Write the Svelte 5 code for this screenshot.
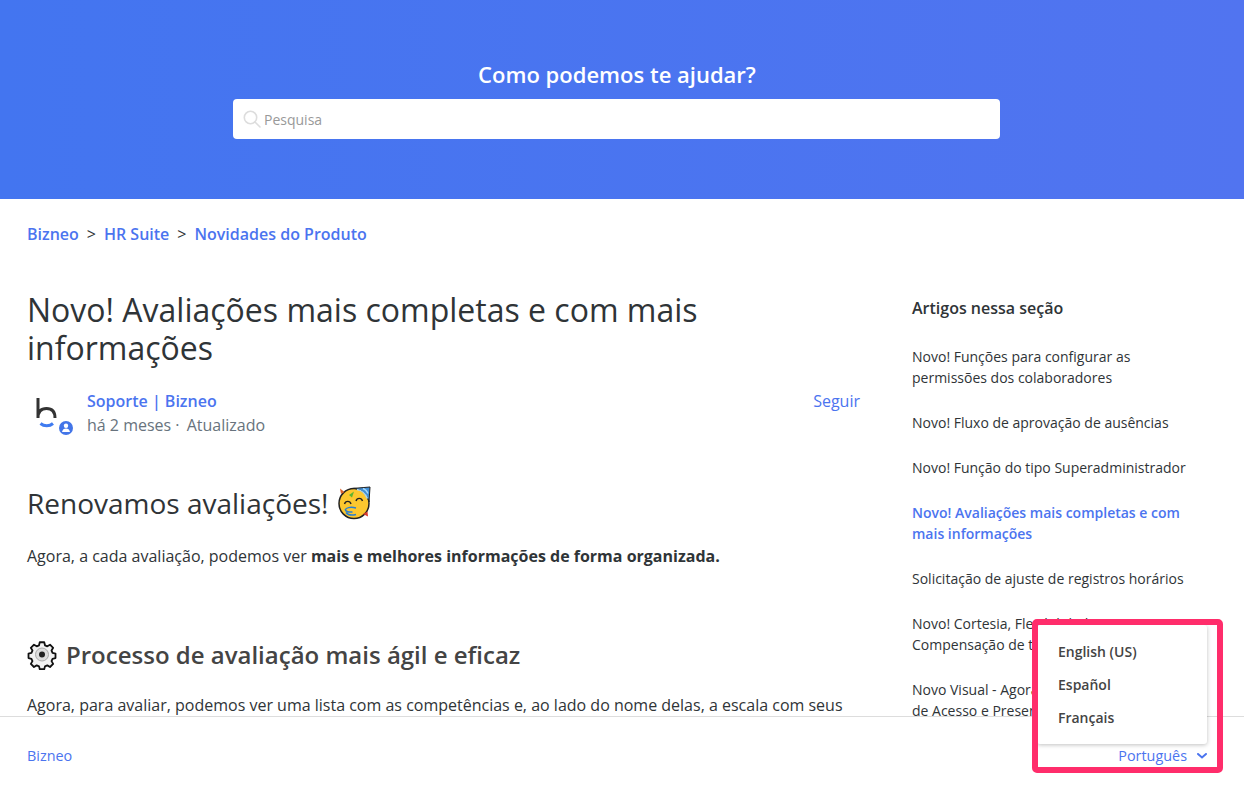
<script>
  const articles = [
    { title: 'Novo! Funções para configurar as permissões dos colaboradores' },
    { title: 'Novo! Fluxo de aprovação de ausências' },
    { title: 'Novo! Função do tipo Superadministrador' },
    { title: 'Novo! Avaliações mais completas e com mais informações', current: true },
    { title: 'Solicitação de ajuste de registros horários' },
    { title: 'Novo! Cortesia, Flexibilidade e Compensação de tempo' },
    { title: 'Novo Visual - Agora no Módulo Controle de Acesso e Presença' }
  ];
  const languages = ['English (US)', 'Español', 'Français'];
</script>

<div class="page">
  <header class="hero">
    <h1>Como podemos te ajudar?</h1>
    <div class="search">
      <svg width="18" height="18" viewBox="0 0 18 18" fill="none" stroke="#ddd" stroke-width="1.6">
        <circle cx="7.5" cy="7.5" r="6.2" />
        <path d="M12 12l5 5" stroke-linecap="round" />
      </svg>
      <span>Pesquisa</span>
    </div>
  </header>

  <main class="content">
    <nav class="crumbs">
      <a href="#a">Bizneo</a><span>&gt;</span><a href="#a">HR Suite</a><span>&gt;</span><a href="#a">Novidades do Produto</a>
    </nav>

    <div class="columns">
      <article>
        <h2 class="title">Novo! Avaliações mais completas e com mais informações</h2>

        <div class="author">
          <div class="avatar">
            <svg width="46" height="46" viewBox="0 0 46 46" fill="none">
              <path d="M11 9v20M11 29c0-6 3-9.500 8.500-9.500S28 23 28 29" stroke="#333" stroke-width="3" />
              <path d="M13.500 34.500c3.500 3 9 3 12.500 0" stroke="#3f7bf0" stroke-width="3" />
              <circle cx="39" cy="39" r="7" fill="#4375e8" />
              <circle cx="39" cy="36.800" r="2.200" fill="#fff" />
              <path d="M35 43c.5-2.500 2-3.500 4-3.500s3.500 1 4 3.500z" fill="#fff" />
            </svg>
          </div>
          <div class="meta">
            <a href="#a" class="name">Soporte | Bizneo</a>
            <div class="when">há 2 meses <span class="dot">·</span> Atualizado</div>
          </div>
          <a href="#a" class="follow">Seguir</a>
        </div>

        <h2 class="h-renew">
          Renovamos avaliações!
          <svg class="emoji" width="34" height="34" viewBox="0 0 34 34">
            <circle cx="17" cy="17.500" r="15" fill="#fcc72f" stroke="#222" stroke-width="1.500" />
            <path d="M15 2.500C23 2 30 7 32 16L33 1z" fill="#3f8fd8" stroke="#222" stroke-width="1" stroke-linejoin="round" />
            <path d="M20 3.500c4 .5 8.500 4 10.500 9" stroke="#a9d8f5" stroke-width="1.500" fill="none" />
            <path d="M26 2.500c2 .5 4 3 5 5" stroke="#a9d8f5" stroke-width="1.300" fill="none" />
            <path d="M3 2.500l4.500 3.500-3.500 2z" fill="#d8632c" />
            <path d="M12 9l5-3.500-2 6z" fill="#5cb531" />
            <path d="M7.500 18c1-3.500 5.500-3.500 6.500 0M19 15c1-3.500 5.500-3.500 6.500 0" stroke="#222" stroke-width="1.400" fill="none" />
            <path d="M19 22c-6-1.500-10 0-10.500 1.500s2.500 3 7 2.500M9 26.500c2 2.500 6 3 10 2" stroke="#2a7fd0" stroke-width="1.500" fill="none" />
            <path d="M26 28l4.500-2.500.5 5z" fill="#d83a2c" />
          </svg>
        </h2>
        <p>Agora, a cada avaliação, podemos ver <strong>mais e melhores informações de forma organizada.</strong></p>

        <h3 class="h-process">
          <svg width="30" height="30" viewBox="0 0 30 30">
            <path d="M12.500 2.500h5l.8 3.400 2.600 1.100 3-1.800 3.500 3.500-1.800 3 1.100 2.600 3.300.8v5l-3.300.8-1.100 2.600 1.800 3-3.500 3.500-3-1.800-2.600 1.100-.8 3.200h-5l-.8-3.200-2.600-1.100-3 1.800-3.500-3.500 1.800-3-1.100-2.600-3.300-.8v-5l3.300-.8 1.100-2.600-1.800-3 3.500-3.500 3 1.800 2.600-1.100z" transform="translate(1.500 0) scale(.9)" fill="#f2f2f2" stroke="#111" stroke-width="2" stroke-linejoin="round" />
            <circle cx="15" cy="14.500" r="6.500" fill="#ddd" stroke="#aaa" stroke-width="1" />
            <circle cx="15" cy="14.500" r="3" fill="#222" />
          </svg>
          Processo de avaliação mais ágil e eficaz
        </h3>
        <p>Agora, para avaliar, podemos ver uma lista com as competências e, ao lado do nome delas, a escala com seus</p>
      </article>

      <aside>
        <h3>Artigos nessa seção</h3>
        <ul>
          {#each articles as item}
            <li class:current={item.current}><a href="#a">{item.title}</a></li>
          {/each}
        </ul>
      </aside>
    </div>
  </main>

  <footer>
    <a href="#a">Bizneo</a>
    <a href="#a" class="lang">
      Português
      <svg width="10" height="6" viewBox="0 0 10 6" fill="none" stroke="#4b74ef" stroke-width="2" stroke-linecap="round">
        <path d="M1 1l4 3.500L9 1" />
      </svg>
    </a>
  </footer>

  <div class="highlight"></div>
  <div class="menu">
    {#each languages as lang}
      <div class="menu-item">{lang}</div>
    {/each}
  </div>
</div>

<style>
  :global(body) {
    margin: 0;
    background: #fff;
  }

  .page {
    height: 796px;
    position: relative;
    display: flex;
    flex-direction: column;
    overflow: hidden;
    font-family: "Open Sans", sans-serif;
    color: #2f3437;
  }

  a {
    color: #4b74ef;
    text-decoration: none;
  }

  .hero {
    height: 199px;
    flex: none;
    box-sizing: border-box;
    padding-top: 58px;
    background: linear-gradient(90deg, #4375f0, #5174f0);
    display: flex;
    flex-direction: column;
    align-items: center;
  }

  .hero h1 {
    margin: 0 10px 9px 0;
    font-size: 22px;
    line-height: 32px;
    font-weight: 600;
    color: #fff;
  }

  .search {
    width: 767px;
    height: 40px;
    margin-left: -11px;
    box-sizing: border-box;
    padding-left: 10px;
    background: #fff;
    border-radius: 4px;
    display: flex;
    align-items: center;
    gap: 3px;
    font-size: 14px;
    color: #999;
  }

  .content {
    flex: 1;
    min-height: 0;
    overflow: hidden;
    padding: 0 27px;
  }

  .crumbs {
    margin-top: 24px;
    font-size: 16px;
    line-height: 22px;
    font-weight: 600;
    display: flex;
    gap: 8px;
  }

  .crumbs span {
    font-weight: 400;
    color: #2f3437;
  }

  .columns {
    display: flex;
    gap: 52px;
    margin-top: 46px;
  }

  article {
    width: 833px;
    flex: none;
  }

  .title {
    margin: 0;
    font-size: 32px;
    line-height: 38px;
    font-weight: 400;
  }

  .author {
    display: flex;
    margin-top: 22px;
    gap: 14px;
    align-items: flex-start;
  }

  .avatar {
    width: 46px;
    height: 46px;
    flex: none;
  }

  .meta {
    flex: 1;
    font-size: 16px;
    line-height: 24px;
  }

  .name {
    font-weight: 600;
    display: block;
  }

  .when {
    color: #68737d;
  }

  .dot {
    margin-right: 3px;
  }

  .follow {
    font-size: 16px;
    line-height: 24px;
  }

  .h-renew {
    margin: 45px 0 0;
    font-size: 28px;
    line-height: 42px;
    font-weight: 400;
    display: flex;
    align-items: center;
    gap: 9px;
  }

  p {
    margin: 20px 0 0;
    font-size: 16px;
    line-height: 24px;
  }

  strong {
    font-weight: 700;
  }

  .h-process {
    margin: 69px 0 2px;
    font-size: 24px;
    line-height: 36px;
    font-weight: 600;
    color: #444;
    display: flex;
    align-items: center;
    gap: 9px;
  }

  aside {
    width: 276px;
    flex: none;
    padding-top: 6px;
  }

  aside h3 {
    margin: 0;
    font-size: 16px;
    line-height: 22px;
    font-weight: 600;
  }

  ul {
    list-style: none;
    margin: 27px 0 0;
    padding: 0;
    display: flex;
    flex-direction: column;
    gap: 24px;
    font-size: 14px;
    line-height: 21px;
  }

  li a {
    color: #2f3437;
    display: block;
  }

  li.current a {
    color: #4b74ef;
    font-weight: 600;
  }

  footer {
    height: 80px;
    flex: none;
    box-sizing: border-box;
    border-top: 1px solid #ddd;
    background: #fff;
    padding: 0 37px 2px 27px;
    display: flex;
    justify-content: space-between;
    align-items: center;
    font-size: 14.4px;
  }

  .lang {
    display: flex;
    align-items: center;
    gap: 10px;
  }

  .menu {
    position: absolute;
    left: 1037px;
    top: 625px;
    width: 170px;
    height: 119px;
    box-sizing: border-box;
    padding: 10px 0;
    background: #fff;
    border-radius: 3px;
    box-shadow: 0 1px 4px rgba(0, 0, 0, 0.25);
    font-size: 14px;
    font-weight: 600;
    color: #444;
  }

  .menu-item {
    height: 33px;
    line-height: 33px;
    padding-left: 21px;
  }

  .highlight {
    position: absolute;
    left: 1032px;
    top: 619px;
    width: 191px;
    height: 154px;
    box-sizing: border-box;
    border: 6px solid #ff2d6b;
    border-radius: 5px;
    z-index: 2;
  }
</style>
